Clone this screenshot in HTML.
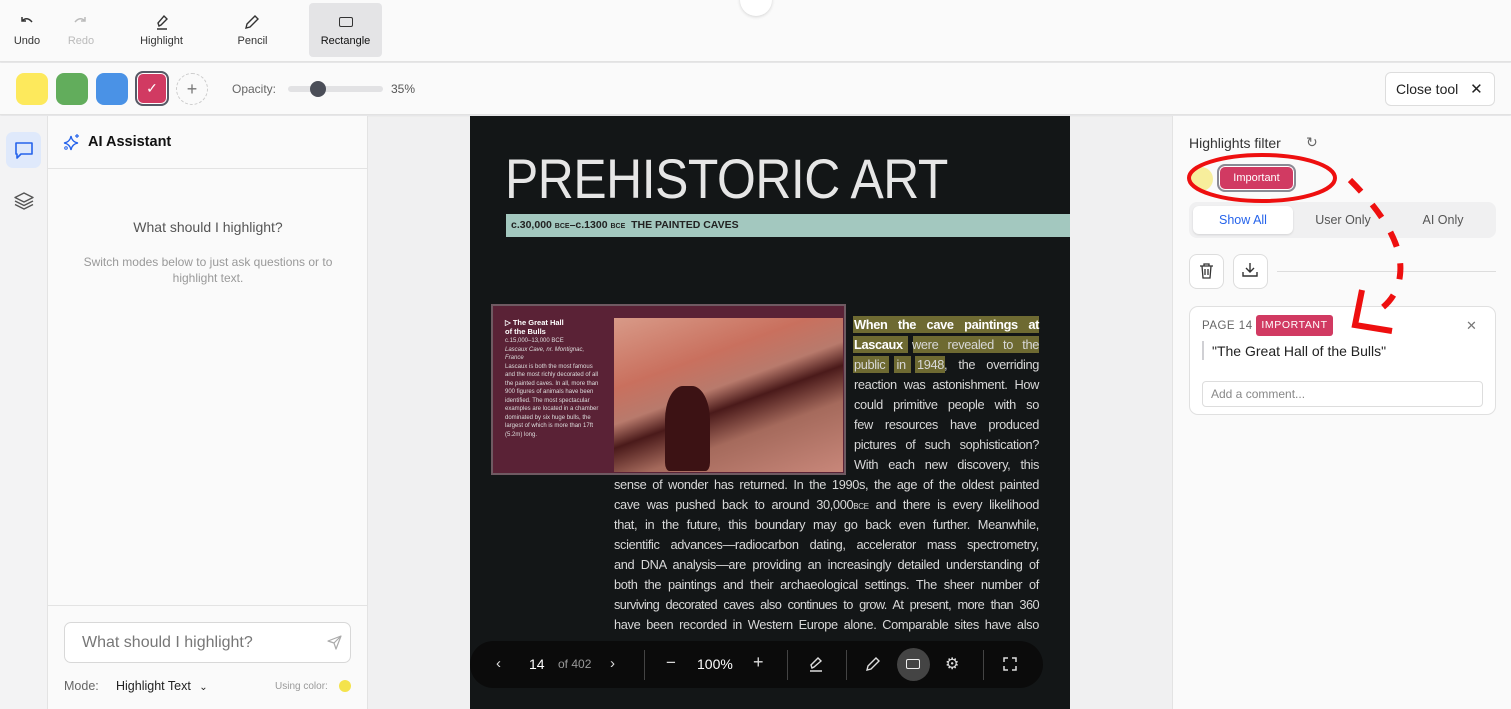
<!DOCTYPE html>
<html><head><meta charset="utf-8"><style>
*{box-sizing:border-box;margin:0;padding:0}
body{width:1511px;height:709px;overflow:hidden;position:relative;font-family:"Liberation Sans",sans-serif;background:#f0f0f1;color:#222}
.a{position:absolute}
.tb{font-size:11px;color:#333;text-align:center}
.ln{position:absolute;font-size:12.8px;color:#d8d8d8;text-align:justify;text-align-last:justify;white-space:nowrap;letter-spacing:-0.35px;line-height:16px}
svg{display:block}
</style></head><body>
<div class="a" style="left:0;top:0;width:1511px;height:62px;background:#fafafa;border-bottom:1px solid #e2e2e2;box-shadow:0 1px 2px rgba(0,0,0,.06)"></div>
<div class="a" style="left:740px;top:-16px;width:32px;height:32px;border-radius:50%;background:#fff;box-shadow:0 1px 3px rgba(0,0,0,.15)"></div>
<div class="a" style="left:309px;top:3px;width:73px;height:54px;background:#e4e4e6;border-radius:4px"></div>
<svg class="a" style="left:19px;top:15px" width="16" height="14" viewBox="0 0 16 14"><path d="M3 6 Q8 1 13 7 M3 2 V6 H7" fill="none" stroke="#333" stroke-width="1.5"/></svg>
<div class="a tb" style="left:0;top:35px;width:54px">Undo</div>
<svg class="a" style="left:72px;top:15px" width="16" height="14" viewBox="0 0 16 14"><path d="M13 6 Q8 1 3 7 M13 2 V6 H9" fill="none" stroke="#bbb" stroke-width="1.5"/></svg>
<div class="a tb" style="left:54px;top:35px;width:54px;color:#bbb">Redo</div>
<svg class="a" style="left:153px;top:13px" width="18" height="18" viewBox="0 0 18 18"><path d="M4 16H14 M6 13 L5 10 L11 3 L14 6 L8 12 Z" fill="none" stroke="#333" stroke-width="1.4"/></svg>
<div class="a tb" style="left:125px;top:35px;width:73px">Highlight</div>
<svg class="a" style="left:244px;top:14px" width="16" height="16" viewBox="0 0 16 16"><path d="M2 14 L3 10 L11 2 L14 5 L6 13 Z" fill="none" stroke="#333" stroke-width="1.4"/></svg>
<div class="a tb" style="left:216px;top:35px;width:73px">Pencil</div>
<div class="a" style="left:339px;top:17px;width:14px;height:10px;border:1.5px solid #333;border-radius:2px"></div>
<div class="a tb" style="left:309px;top:35px;width:73px;color:#111">Rectangle</div>
<div class="a" style="left:0;top:63px;width:1511px;height:52px;background:#fafafa;border-bottom:1px solid #e2e2e2;box-shadow:0 1px 2px rgba(0,0,0,.06)"></div>
<div class="a" style="left:16px;top:73px;width:32px;height:32px;border-radius:8px;background:#fde95c"></div>
<div class="a" style="left:56px;top:73px;width:32px;height:32px;border-radius:8px;background:#62ad5c"></div>
<div class="a" style="left:96px;top:73px;width:32px;height:32px;border-radius:8px;background:#4a92e6"></div>
<div class="a" style="left:135px;top:71px;width:34px;height:35px;border-radius:8px;border:2px solid #555a66;background:#d13a62;box-shadow:inset 0 0 0 1px #fff;color:#fff;font-size:14px;text-align:center;line-height:31px">✓</div>
<div class="a" style="left:176px;top:73px;width:32px;height:32px;border-radius:50%;border:1px dashed #ccc;color:#777;text-align:center;line-height:30px;font-size:18px">+</div>
<div class="a" style="left:232px;top:82px;font-size:12px;color:#666">Opacity:</div>
<div class="a" style="left:288px;top:86px;width:95px;height:6px;border-radius:3px;background:#e2e2e4"></div>
<div class="a" style="left:310px;top:81px;width:16px;height:16px;border-radius:50%;background:#4b4e58"></div>
<div class="a" style="left:391px;top:82px;font-size:12px;color:#555">35%</div>
<div class="a" style="left:1385px;top:72px;width:110px;height:34px;border:1px solid #ddd;border-radius:6px;background:#fff;font-size:14px;color:#222;line-height:32px;padding-left:10px">Close tool <span style="margin-left:8px;font-size:15px">✕</span></div>
<div class="a" style="left:0;top:116px;width:48px;height:593px;background:#f3f3f4;border-right:1px solid #e3e3e3"></div>
<div class="a" style="left:6px;top:132px;width:35px;height:36px;border-radius:7px;background:#dfe9fb"></div>
<svg class="a" style="left:14px;top:141px" width="20" height="19" viewBox="0 0 20 19"><path d="M2 2H18V13H7L3 17V13H2Z" fill="none" stroke="#2563eb" stroke-width="1.6" stroke-linejoin="round"/></svg>
<svg class="a" style="left:13px;top:191px" width="22" height="20" viewBox="0 0 22 20"><path d="M11 2 L20 6.5 L11 11 L2 6.5 Z M2 10 L11 14.5 L20 10 M2 13.5 L11 18 L20 13.5" fill="none" stroke="#555" stroke-width="1.4" stroke-linejoin="round"/></svg>
<div class="a" style="left:48px;top:116px;width:320px;height:593px;background:#fafafa;border-right:1px solid #e3e3e3"></div>
<svg class="a" style="left:63px;top:133px" width="18" height="18" viewBox="0 0 18 18"><path d="M8 3 Q9 9 15 10 Q9 11 8 17 Q7 11 1 10 Q7 9 8 3Z" fill="none" stroke="#2563eb" stroke-width="1.3"/><path d="M14 1V5M12 3H16" stroke="#2563eb" stroke-width="1.2"/><circle cx="3" cy="15" r="1.3" fill="none" stroke="#2563eb"/></svg>
<div class="a" style="left:88px;top:134px;font-size:14.5px;font-weight:bold;color:#111">AI Assistant</div>
<div class="a" style="left:48px;top:168px;width:320px;height:1px;background:#e3e3e3"></div>
<div class="a" style="left:48px;top:219px;width:320px;text-align:center;font-size:14px;color:#555">What should I highlight?</div>
<div class="a" style="left:48px;top:254px;width:320px;text-align:center;font-size:12px;color:#999;line-height:16px">Switch modes below to just ask questions or to<br>highlight text.</div>
<div class="a" style="left:48px;top:605px;width:320px;height:1px;background:#e3e3e3"></div>
<div class="a" style="left:64px;top:622px;width:287px;height:41px;border:1px solid #d8d8d8;border-radius:7px;background:#fff;font-size:16px;color:#777;line-height:40px;padding-left:17px">What should I highlight?</div>
<svg class="a" style="left:326px;top:634px" width="17" height="17" viewBox="0 0 17 17"><path d="M15 2 L2 7 L8 9 L10 15 Z M15 2 L8 9" fill="none" stroke="#aaa" stroke-width="1.2" stroke-linejoin="round"/></svg>
<div class="a" style="left:64px;top:679px;font-size:12.5px;color:#666">Mode:</div>
<div class="a" style="left:116px;top:679px;font-size:12.5px;color:#222">Highlight Text <span style="margin-left:5px;font-size:10px">⌄</span></div>
<div class="a" style="left:275px;top:681px;font-size:10px;color:#999">Using color:</div>
<div class="a" style="left:339px;top:680px;width:12px;height:12px;border-radius:50%;background:#f4e34c"></div>
<div class="a" style="left:470px;top:116px;width:600px;height:593px;background:#131617;overflow:hidden">
 <div class="a" style="left:35px;top:30px;font-size:56px;color:#e6e6e6;letter-spacing:-0.5px;transform:scaleX(.89);transform-origin:left;white-space:nowrap">PREHISTORIC ART</div>
 <div class="a" style="left:36px;top:98px;width:564px;height:23px;background:#a3c8bf;font-size:10.5px;font-weight:bold;color:#222;line-height:23px;padding-left:5px">c.30,000 <span style="font-size:7px">BCE</span>–c.1300 <span style="font-size:7px">BCE</span>&nbsp; THE PAINTED CAVES</div>
 <div class="a" style="left:21px;top:188px;width:355px;height:171px;background:#5a2236;border:2px solid #6f5a62"></div>
 <div class="a" style="left:144px;top:202px;width:229px;height:154px;background:linear-gradient(160deg,#d89a88 0%,#c9705e 30%,#b87a6c 45%,#4a1a1a 55%,#a56a5c 70%,#c8877a 100%)"></div>
 <div class="a" style="left:195px;top:270px;width:45px;height:85px;background:#3c1214;border-radius:40% 40% 10% 10%"></div>
 <div class="a" style="left:35px;top:202px;width:95px;font-size:7.5px;font-weight:bold;color:#fff;line-height:9px">▷ The Great Hall<br>of the Bulls</div>
 <div class="a" style="left:35px;top:221px;width:95px;font-size:6px;color:#ddd;line-height:8.5px">c.15,000–13,000 BCE<br><i>Lascaux Cave, nr. Montignac, France</i><br>Lascaux is both the most famous and the most richly decorated of all the painted caves. In all, more than 900 figures of animals have been identified. The most spectacular examples are located in a chamber dominated by six huge bulls, the largest of which is more than 17ft (5.2m) long.</div>
 <div class="a" style="left:383px;top:200px;width:186px;height:17px;background:#6e6a32"></div>
 <div class="a" style="left:383px;top:220px;width:55px;height:17px;background:#6e6a32"></div>
 <div class="a" style="left:443px;top:220px;width:126px;height:17px;background:#6e6a32"></div>
 <div class="a" style="left:383px;top:240px;width:36px;height:17px;background:#6e6a32"></div>
 <div class="a" style="left:424px;top:240px;width:17px;height:17px;background:#6e6a32"></div>
 <div class="a" style="left:445px;top:240px;width:30px;height:17px;background:#6e6a32"></div>
 <div class="ln" style="left:384px;top:201px;width:185px;font-weight:bold;color:#fff">When the cave paintings at</div>
 <div class="ln" style="left:384px;top:221px;width:185px"><b style="color:#fff">Lascaux</b> were revealed to the</div>
 <div class="ln" style="left:384px;top:241px;width:185px">public in 1948, the overriding</div>
 <div class="ln" style="left:384px;top:261px;width:185px">reaction was astonishment. How</div>
 <div class="ln" style="left:384px;top:281px;width:185px">could primitive people with so</div>
 <div class="ln" style="left:384px;top:301px;width:185px">few resources have produced</div>
 <div class="ln" style="left:384px;top:321px;width:185px">pictures of such sophistication?</div>
 <div class="ln" style="left:384px;top:341px;width:185px">With each new discovery, this</div>
 <div class="ln" style="left:144px;top:361px;width:425px">sense of wonder has returned. In the 1990s, the age of the oldest painted</div>
 <div class="ln" style="left:144px;top:381px;width:425px">cave was pushed back to around 30,000<span style="font-size:8px">BCE</span> and there is every likelihood</div>
 <div class="ln" style="left:144px;top:401px;width:425px">that, in the future, this boundary may go back even further. Meanwhile,</div>
 <div class="ln" style="left:144px;top:421px;width:425px">scientific advances—radiocarbon dating, accelerator mass spectrometry,</div>
 <div class="ln" style="left:144px;top:441px;width:425px">and DNA analysis—are providing an increasingly detailed understanding of</div>
 <div class="ln" style="left:144px;top:461px;width:425px">both the paintings and their archaeological settings. The sheer number of</div>
 <div class="ln" style="left:144px;top:481px;width:425px;letter-spacing:-0.6px">surviving decorated caves also continues to grow. At present, more than 360</div>
 <div class="ln" style="left:144px;top:501px;width:425px">have been recorded in Western Europe alone. Comparable sites have also</div>
</div>
<div class="a" style="left:470px;top:641px;width:573px;height:47px;border-radius:24px;background:#0b0b0b;color:#eee"></div>
<div class="a" style="left:496px;top:655px;font-size:15px;color:#ddd">‹</div>
<div class="a" style="left:529px;top:656px;font-size:14px;color:#fff">14</div>
<div class="a" style="left:558px;top:657px;font-size:12px;color:#999">of 402</div>
<div class="a" style="left:610px;top:655px;font-size:15px;color:#ddd">›</div>
<div class="a" style="left:644px;top:650px;width:1px;height:30px;background:#444"></div>
<div class="a" style="left:666px;top:653px;font-size:17px;color:#ddd">−</div>
<div class="a" style="left:697px;top:656px;font-size:14px;color:#fff">100%</div>
<div class="a" style="left:753px;top:652px;font-size:18px;color:#ddd">+</div>
<div class="a" style="left:787px;top:650px;width:1px;height:30px;background:#444"></div>
<svg class="a" style="left:808px;top:655px" width="18" height="18" viewBox="0 0 18 18"><path d="M2 16H14 M4 13 L3 10 L10 3 L13 6 L6 12 Z" fill="none" stroke="#ddd" stroke-width="1.4"/></svg>
<div class="a" style="left:846px;top:650px;width:1px;height:30px;background:#444"></div>
<svg class="a" style="left:865px;top:656px" width="16" height="16" viewBox="0 0 16 16"><path d="M2 14 L3 10 L11 2 L14 5 L6 13 Z" fill="none" stroke="#ddd" stroke-width="1.4"/></svg>
<div class="a" style="left:897px;top:648px;width:33px;height:33px;border-radius:50%;background:#444"></div>
<div class="a" style="left:906px;top:659px;width:14px;height:10px;border:1.5px solid #eee;border-radius:2px"></div>
<div class="a" style="left:945px;top:654px;font-size:16px;color:#ddd">⚙</div>
<div class="a" style="left:983px;top:650px;width:1px;height:30px;background:#444"></div>
<svg class="a" style="left:1003px;top:657px" width="14" height="14" viewBox="0 0 14 14"><path d="M1 5V1H5 M9 1H13V5 M13 9V13H9 M5 13H1V9" fill="none" stroke="#ddd" stroke-width="1.5"/></svg>
<div class="a" style="left:1172px;top:116px;width:339px;height:593px;background:#fafafa;border-left:1px solid #e3e3e3"></div>
<div class="a" style="left:1189px;top:135px;font-size:14px;color:#333">Highlights filter</div>
<div class="a" style="left:1306px;top:134px;font-size:14px;color:#666">↻</div>
<div class="a" style="left:1189px;top:167px;width:24px;height:24px;border-radius:50%;background:#f7ee9c"></div>
<div class="a" style="left:1217px;top:164px;width:79px;height:28px;border-radius:8px;border:2px solid #8a8a94;background:#d13a62;box-shadow:inset 0 0 0 1px #fff;color:#fff;font-size:11px;text-align:center;line-height:24px">Important</div>
<div class="a" style="left:1189px;top:202px;width:307px;height:36px;border-radius:8px;background:#f0f0f1"></div>
<div class="a" style="left:1193px;top:206px;width:100px;height:28px;border-radius:6px;background:#fff;box-shadow:0 1px 2px rgba(0,0,0,.12);text-align:center;line-height:28px;font-size:12.5px;color:#2563eb">Show All</div>
<div class="a" style="left:1293px;top:206px;width:100px;text-align:center;line-height:28px;font-size:12.5px;color:#555">User Only</div>
<div class="a" style="left:1393px;top:206px;width:100px;text-align:center;line-height:28px;font-size:12.5px;color:#555">AI Only</div>
<div class="a" style="left:1189px;top:254px;width:35px;height:35px;border:1px solid #ddd;border-radius:8px;background:#fff"></div>
<svg class="a" style="left:1199px;top:263px" width="15" height="16" viewBox="0 0 15 16"><path d="M1 3H14 M5 3V1H10V3 M3 3L4 15H11L12 3 M6 6V12 M9 6V12" fill="none" stroke="#333" stroke-width="1.3"/></svg>
<div class="a" style="left:1233px;top:254px;width:35px;height:35px;border:1px solid #ddd;border-radius:8px;background:#fff"></div>
<svg class="a" style="left:1242px;top:262px" width="16" height="16" viewBox="0 0 16 16"><path d="M8 1V10 M4 6L8 10L12 6 M1 10V14H15V10" fill="none" stroke="#333" stroke-width="1.4"/></svg>
<div class="a" style="left:1277px;top:271px;width:219px;height:1px;background:#ddd"></div>
<div class="a" style="left:1189px;top:306px;width:307px;height:109px;border:1px solid #e0e0e0;border-radius:9px;background:#fff"></div>
<div class="a" style="left:1202px;top:320px;font-size:11.5px;color:#666;letter-spacing:.5px">PAGE 14</div>
<div class="a" style="left:1256px;top:315px;width:77px;height:21px;border-radius:3px;background:#d13a62;color:#fff;font-size:10.5px;letter-spacing:.6px;text-align:center;line-height:21px">IMPORTANT</div>
<div class="a" style="left:1466px;top:318px;font-size:13px;color:#777">✕</div>
<div class="a" style="left:1202px;top:341px;width:2px;height:19px;background:#d0d0d4"></div>
<div class="a" style="left:1212px;top:343px;font-size:14px;color:#222">"The Great Hall of the Bulls"</div>
<div class="a" style="left:1202px;top:381px;width:281px;height:26px;border:1px solid #ddd;border-radius:4px;font-size:12px;color:#888;line-height:24px;padding-left:8px">Add a comment...</div>
<svg class="a" style="left:1170px;top:140px" width="260" height="210" viewBox="0 0 260 210">
<ellipse cx="92" cy="38" rx="73" ry="23" fill="none" stroke="#ee0f0f" stroke-width="4"/>
<path d="M180 40 Q235 95 230 135 Q228 155 212 168" fill="none" stroke="#ee0f0f" stroke-width="6" stroke-dasharray="16 17"/>
<path d="M192 150 L185 185 L222 191" fill="none" stroke="#ee0f0f" stroke-width="6" stroke-linejoin="miter"/>
</svg>
</body></html>
